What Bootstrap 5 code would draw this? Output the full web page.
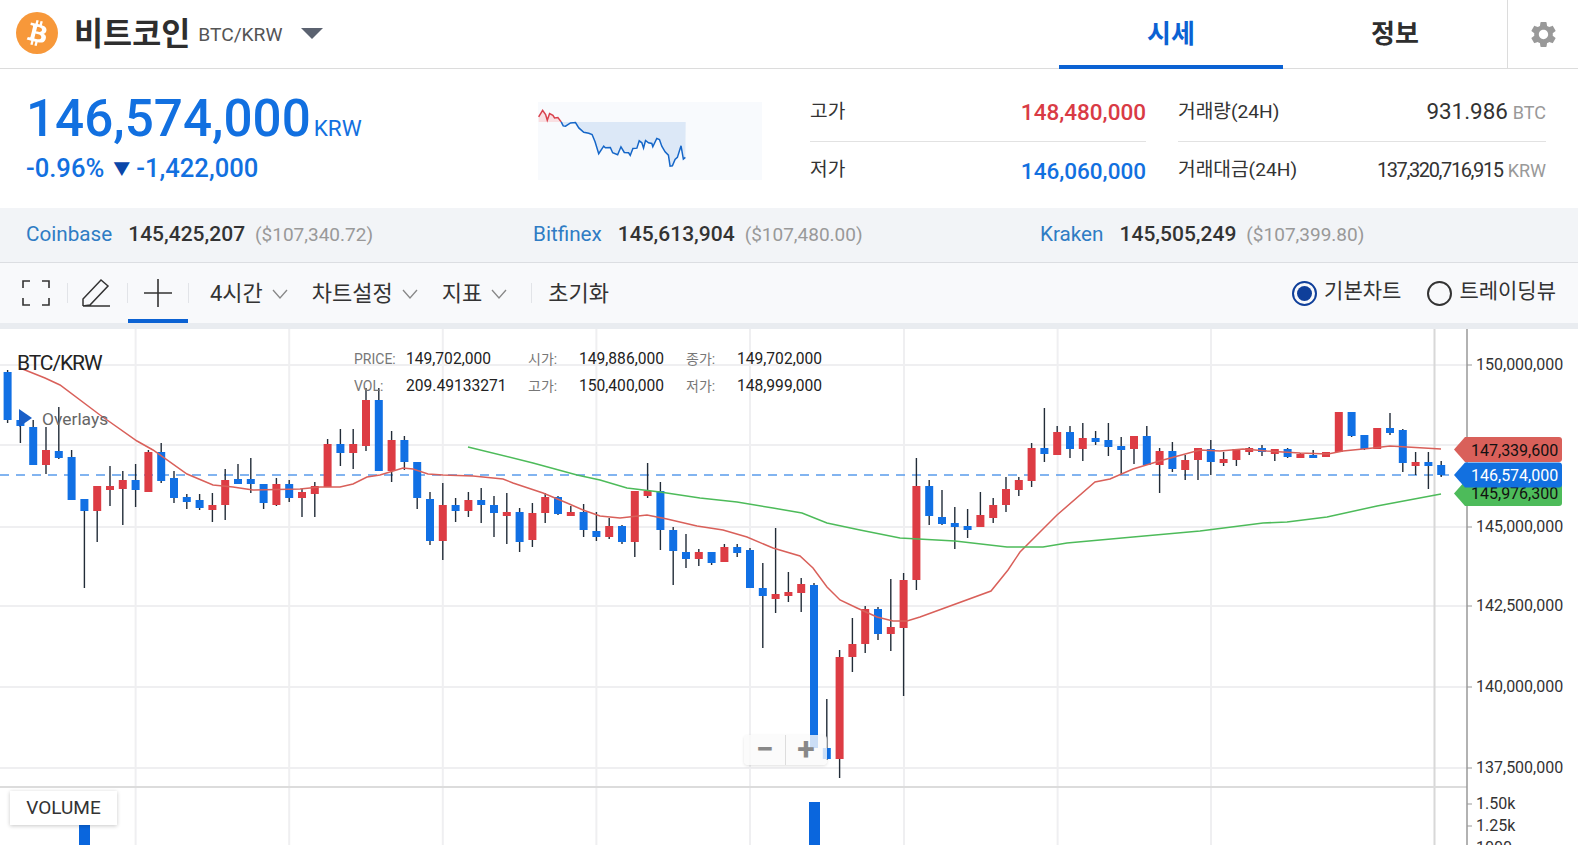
<!DOCTYPE html>
<html lang="ko">
<head>
    <meta charset="UTF-8">
    <meta name="viewport" content="width=device-width, initial-scale=1">
    <title>비트코인 BTC/KRW</title>
    <link href="https://cdn.jsdelivr.net/npm/bootstrap@5.3.0/dist/css/bootstrap.min.css" rel="stylesheet">
    <style>
        html, body { height: 845px; overflow: hidden; }
        body { font-family: Roboto, "Noto Sans CJK KR", sans-serif; color: #333; background: #fff; }
        .top-bar { height: 69px; border-bottom: 1px solid #dcdcdc; }
        .coin-logo { width: 42px; height: 42px; margin-left: 16px; margin-top: -2px; }
        .coin-name { font-size: 31.6px; font-weight: 700; margin-left: 16px; margin-top: 1px; color: #2e2e2e; }
        .coin-pair { font-size: 19.2px; color: #555; margin-left: 8px; margin-top: 2px; }
        .coin-caret { width: 0; height: 0; margin-left: 19px; margin-top: -1px; border-left: 11px solid transparent; border-right: 11px solid transparent; border-top: 11px solid #5b6270; }
        .tab-cell { width: 224px; height: 69px; font-size: 26px; font-weight: 700; color: #2e2e2e; margin-bottom: -1px; }
        .tab-cell.is-on { color: #0b62d3; border-bottom: 4px solid #0b62d3; padding-top: 4px; }
        .gear-cell { width: 71px; height: 68px; border-left: 1px solid #dcdcdc; }
        .price-row { height: 139px; }
        .price-main { width: 538px; padding-left: 26px; color: #1270e0; }
        .price-big { font-size: 51.2px; font-weight: 500; line-height: 60px; margin-top: 20px; }
        .price-unit { font-size: 22.5px; font-weight: 400; margin-left: 3px; }
        .price-sub { font-size: 25.6px; font-weight: 500; line-height: 32px; margin-top: -6px; }
        .down-arrow { color: #0a47a9; font-size: 17px; margin: 0 6px 0 9px; vertical-align: 2px; }
        .spark-box { width: 224px; height: 78px; margin-top: 33px; background: #f8fafd; }
        .stat-wrap { margin-left: 48px; margin-top: 14px; gap: 32px; }
        .stat-col { width: 336px; }
        .stat-col.wide { width: 368px; }
        .stat-line { height: 58px; font-size: 19.2px; }
        .stat-line + .stat-line { border-top: 1px solid #e2e2e2; }
        .stat-val { font-size: 22.5px; font-weight: 500; padding-top: 2px; }
        .stat-big { font-size: 22.4px; }
        .stat-long { font-size: 20px; letter-spacing: -1.4px; }
        .stat-unit { font-size: 18px; color: #999; margin-left: 5px; }
        .txt-up { color: #d93b45; }
        .txt-down { color: #1270e0; }
        .ex-strip { height: 54px; background: #f2f4f7; font-size: 20.7px; }
        .ex-item { width: 507px; padding-left: 26px; }
        .ex-name { color: #2f7cc4; margin-right: 16px; }
        .ex-val { font-size: 21px; font-weight: 500; margin-right: 10px; }
        .ex-usd { color: #999; font-size: 19px; }
        .tool-bar { height: 61px; background: #f8f9fb; border-top: 1px solid #dcdee2; font-size: 21px; color: #333; }
        .tool-ico { width: 59px; height: 60px; }
        .tool-ico.first { width: 63px; }
        .tool-ico.is-on { width: 60px; border-bottom: 4px solid #0b62d3; padding-top: 4px; }
        .tool-sep { width: 1px; height: 20px; background: #e2e4e8; }
        .tool-sep.wide-gap { margin-right: 21px; }
        .tool-text { font-size: 22px; padding-top: 1px; }
        .tool-drop { margin-right: 24px; }
        .tool-drop svg { margin-left: 9px; }
        .radio-dot { width: 25px; height: 25px; border-radius: 50%; border: 2px solid #333; margin-right: 7px; }
        .radio-dot.is-on { border-color: #0f3f9a; }
        .radio-dot.is-on::after { content: ""; width: 15px; height: 15px; border-radius: 50%; background: #0f3f9a; }
        .radio-dot.second { margin-left: 26px; }
        .radio-label { margin-top: -2px; }
        .radio-label.last { margin-right: 22px; }
        .under-strip { height: 6px; background: #e9ecf0; }
        .chart-zone { height: 516px; overflow: hidden; }
        .chart-zone svg { display: block; }
        .chart-title { left: 17px; top: 22px; font-size: 21px; letter-spacing: -1.1px; color: #222; line-height: 24px; }
        .chart-overlays { left: 42px; top: 80px; font-size: 17.4px; color: #666; line-height: 20px; }
        .chart-tri { left: 19px; top: 80px; width: 0; height: 0; border-top: 9px solid transparent; border-bottom: 9px solid transparent; border-left: 13px solid #1a5fc8; }
        .ohlc-box { left: 354px; top: 17px; font-size: 15.6px; line-height: 27px; color: #222; display: grid; grid-template-columns: 52px 122px 51px 107px 51px 90px; }
        .ohlc-key { color: #777; font-size: 14px; }
        .zoom-box { left: 744px; top: 406px; width: 83px; height: 30px; background: rgba(250,250,250,.8); border-radius: 4px; box-shadow: 0 1px 3px rgba(0,0,0,.12); }
        .zoom-half { width: 41px; font-size: 32px; line-height: 29px; font-weight: 700; color: #888; }
        .zoom-half + .zoom-half { border-left: 1px solid #ddd; }
        .volume-tag { left: 10px; top: 462px; width: 107px; height: 34px; line-height: 34px; background: #fff; font-size: 19px; color: #333; box-shadow: 0 1px 4px rgba(0,0,0,.22); }
    </style>
</head>
<body>
    <div class="top-bar d-flex align-items-center">
        <svg class="coin-logo flex-shrink-0" viewBox="0 0 32 32"><circle cx="16" cy="16" r="16" fill="#f7983a"/><path fill="#fff" d="M23.189 14.02c.314-2.096-1.283-3.223-3.465-3.975l.708-2.84-1.728-.43-.69 2.765c-.454-.114-.92-.22-1.385-.326l.695-2.783L15.596 6l-.708 2.839c-.376-.086-.746-.17-1.104-.26l.002-.009-2.384-.595-.46 1.846s1.283.294 1.256.312c.7.175.826.638.805 1.006l-.806 3.235c.048.012.11.03.18.057l-.183-.045-1.13 4.532c-.086.212-.303.531-.793.41.018.025-1.256-.313-1.256-.313l-.858 1.978 2.25.561c.418.105.828.215 1.231.318l-.715 2.872 1.727.43.708-2.84c.472.127.93.245 1.378.357l-.706 2.828 1.728.43.715-2.866c2.948.558 5.164.333 6.097-2.333.752-2.146-.037-3.385-1.588-4.192 1.13-.26 1.98-1.003 2.207-2.538zm-3.95 5.538c-.533 2.147-4.148.986-5.32.695l.95-3.805c1.172.293 4.929.872 4.37 3.11zm.535-5.569c-.487 1.953-3.495.96-4.47.717l.86-3.45c.975.243 4.118.696 3.61 2.733z"/></svg>
        <span class="coin-name">비트코인</span>
        <span class="coin-pair">BTC/KRW</span>
        <span class="coin-caret"></span>
        <div class="d-flex ms-auto">
            <div class="tab-cell is-on d-flex align-items-center justify-content-center">시세</div>
            <div class="tab-cell d-flex align-items-center justify-content-center">정보</div>
            <div class="gear-cell d-flex align-items-center justify-content-center">
                <svg width="31" height="31" viewBox="0 0 24 24" fill="#999"><path d="M19.14 12.94c.04-.3.06-.61.06-.94 0-.32-.02-.64-.07-.94l2.03-1.58c.18-.14.23-.41.12-.61l-1.92-3.32c-.12-.22-.37-.29-.59-.22l-2.39.96c-.5-.38-1.03-.7-1.62-.94l-.36-2.54c-.04-.24-.24-.41-.48-.41h-3.84c-.24 0-.43.17-.47.41l-.36 2.54c-.59.24-1.13.57-1.62.94l-2.39-.96c-.22-.08-.47 0-.59.22L2.74 8.87c-.12.21-.08.47.12.61l2.03 1.58c-.05.3-.09.63-.09.94s.02.64.07.94l-2.03 1.58c-.18.14-.23.41-.12.61l1.92 3.32c.12.22.37.29.59.22l2.39-.96c.5.38 1.03.7 1.62.94l.36 2.54c.05.24.24.41.48.41h3.84c.24 0 .44-.17.47-.41l.36-2.54c.59-.24 1.13-.56 1.62-.94l2.39.96c.22.08.47 0 .59-.22l1.92-3.32c.12-.22.07-.47-.12-.61l-2.01-1.58zM12 15.6c-1.98 0-3.6-1.62-3.6-3.6s1.62-3.6 3.6-3.6 3.6 1.62 3.6 3.6-1.62 3.6-3.6 3.6z"/></svg>
            </div>
        </div>
    </div>

    <div class="price-row d-flex">
        <div class="price-main">
            <div class="price-big">146,574,000<span class="price-unit">KRW</span></div>
            <div class="price-sub">-0.96%<span class="down-arrow">▼</span>-1,422,000</div>
        </div>
        <div class="spark-box">
            <svg width="224" height="78" viewBox="54 65 671 235">
                <path d="M54 125V110L66 90 75 103 80 120 87 100 97 105 102 113 112 112 122 125Z" fill="#f9dfe2"/>
                <path id="sparkFill" fill="#dce8f7"/>
                <path d="M54 110L66 90 75 103 80 120 87 100 97 105 102 113 112 112 122 125" fill="none" stroke="#d8404c" stroke-width="4.5"/>
                <path id="sparkLine" fill="none" stroke="#1566c8" stroke-width="4.5"/>
            </svg>
        </div>
        <div class="stat-wrap d-flex">
            <div class="stat-col">
                <div class="stat-line d-flex align-items-center justify-content-between"><span>고가</span><span class="stat-val txt-up">148,480,000</span></div>
                <div class="stat-line d-flex align-items-center justify-content-between"><span>저가</span><span class="stat-val txt-down">146,060,000</span></div>
            </div>
            <div class="stat-col wide">
                <div class="stat-line d-flex align-items-center justify-content-between"><span>거래량(24H)</span><span><span class="stat-big">931.986</span><span class="stat-unit">BTC</span></span></div>
                <div class="stat-line d-flex align-items-center justify-content-between"><span>거래대금(24H)</span><span><span class="stat-long">137,320,716,915</span><span class="stat-unit">KRW</span></span></div>
            </div>
        </div>
    </div>

    <div class="ex-strip d-flex align-items-center">
        <div class="ex-item"><span class="ex-name">Coinbase</span><span class="ex-val">145,425,207</span><span class="ex-usd">($107,340.72)</span></div>
        <div class="ex-item"><span class="ex-name">Bitfinex</span><span class="ex-val">145,613,904</span><span class="ex-usd">($107,480.00)</span></div>
        <div class="ex-item"><span class="ex-name">Kraken</span><span class="ex-val">145,505,249</span><span class="ex-usd">($107,399.80)</span></div>
    </div>

    <div class="tool-bar d-flex align-items-center">
        <div class="tool-ico first d-flex align-items-center justify-content-center ms-1">
            <svg width="28" height="26" viewBox="0 0 28 26" fill="none" stroke="#333" stroke-width="1.6"><path d="M1 8V1H8M20 1H27V8M27 18V25H20M8 25H1V18"/></svg>
        </div>
        <div class="tool-sep"></div>
        <div class="tool-ico d-flex align-items-center justify-content-center pe-1">
            <svg width="30" height="30" viewBox="0 0 30 30" fill="none" stroke="#333" stroke-width="1.5"><path d="M2 28V21L20 2 27 8 9 27 2 28H29"/></svg>
        </div>
        <div class="tool-sep"></div>
        <div class="tool-ico is-on d-flex align-items-center justify-content-center">
            <svg width="28" height="28" viewBox="0 0 28 28" stroke="#333" stroke-width="1.6"><path d="M14 0V28M0 14H28"/></svg>
        </div>
        <div class="tool-sep wide-gap"></div>
        <div class="tool-drop tool-text d-flex align-items-center">4시간<svg width="16" height="10" viewBox="0 0 16 10" fill="none" stroke="#888" stroke-width="1.3"><path d="M1 1L8 9 15 1"/></svg></div>
        <div class="tool-drop tool-text d-flex align-items-center">차트설정<svg width="16" height="10" viewBox="0 0 16 10" fill="none" stroke="#888" stroke-width="1.3"><path d="M1 1L8 9 15 1"/></svg></div>
        <div class="tool-drop tool-text d-flex align-items-center">지표<svg width="16" height="10" viewBox="0 0 16 10" fill="none" stroke="#888" stroke-width="1.3"><path d="M1 1L8 9 15 1"/></svg></div>
        <div class="tool-sep me-3"></div>
        <div class="tool-text">초기화</div>
        <div class="d-flex align-items-center ms-auto">
            <span class="radio-dot is-on d-flex align-items-center justify-content-center"></span><span class="radio-label">기본차트</span>
            <span class="radio-dot second d-flex"></span><span class="radio-label last">트레이딩뷰</span>
        </div>
    </div>
    <div class="under-strip"></div>

    <div class="chart-zone position-relative">
        <svg id="chart" width="1578" height="516" viewBox="0 329 1578 516"></svg>
        <div class="chart-title position-absolute">BTC/KRW</div>
        <div class="chart-tri position-absolute"></div>
        <div class="chart-overlays position-absolute">Overlays</div>
        <div class="ohlc-box position-absolute">
            <span class="ohlc-key">PRICE:</span><span>149,702,000</span><span class="ohlc-key">시가:</span><span>149,886,000</span><span class="ohlc-key">종가:</span><span>149,702,000</span>
            <span class="ohlc-key">VOL:</span><span>209.49133271</span><span class="ohlc-key">고가:</span><span>150,400,000</span><span class="ohlc-key">저가:</span><span>148,999,000</span>
        </div>
        <div class="zoom-box position-absolute d-flex text-center">
            <div class="zoom-half">−</div>
            <div class="zoom-half">+</div>
        </div>
        <div class="volume-tag position-absolute text-center">VOLUME</div>
    </div>

    <script src="https://cdn.jsdelivr.net/npm/bootstrap@5.3.0/dist/js/bootstrap.bundle.min.js"></script>
    <script>
        // sparkline, in px of the zoomed box
        const spark = "122 125,128 137,135 138,150 128,165 127,175 143,190 156,205 159,215 163,224 185,235 221,250 198,255 203,270 202,277 218,292 224,302 200,312 217,325 218,330 226,338 205,350 204,357 182,365 188,370 204,376 181,385 188,395 190,398 200,410 175,418 178,425 198,435 215,445 225,450 258,457 257,465 238,472 232,483 197,490 237,496 232";
        document.getElementById("sparkLine").setAttribute("d", "M" + spark);
        document.getElementById("sparkFill").setAttribute("d", "M" + spark + ",497 125Z");

        // bodyTop, bodyBottom, wickTop, wickBottom, colour
        const candles = [
            [372,420,370,423,"b"],[420,426,420,443,"b"],[427,465,420,465,"b"],[450,465,427,474,"r"],[451,458,407,459,"b"],
            [457,500,450,500,"b"],[499,511,499,588,"b"],[486,511,486,542,"r"],[486,490,466,506,"r"],[480,489,471,525,"r"],
            [480,490,464,507,"b"],[452,492,450,492,"r"],[452,481,443,483,"b"],[478,498,471,503,"b"],[497,502,494,509,"b"],
            [500,508,494,510,"b"],[505,510,493,522,"r"],[480,505,469,520,"r"],[479,484,464,484,"b"],[479,484,458,493,"b"],
            [484,503,484,509,"b"],[484,505,478,506,"r"],[484,498,480,502,"b"],[492,498,489,517,"r"],[486,494,482,517,"r"],
            [444,487,439,487,"r"],[444,453,429,466,"b"],[444,453,429,469,"r"],[400,446,388,451,"r"],[400,471,388,471,"b"],
            [440,471,431,482,"r"],[440,462,436,470,"b"],[462,498,462,509,"b"],[499,541,492,545,"b"],[505,541,483,560,"r"],
            [505,511,498,522,"b"],[500,511,492,517,"r"],[500,505,488,523,"b"],[505,513,496,537,"b"],[512,516,493,544,"r"],
            [512,542,508,552,"b"],[513,540,503,547,"r"],[497,513,493,523,"r"],[497,514,496,515,"b"],[512,516,506,516,"r"],
            [512,530,504,537,"b"],[531,537,512,541,"b"],[526,537,518,539,"r"],[526,542,525,544,"b"],[491,542,491,557,"r"],
            [491,496,463,498,"r"],[491,530,482,550,"b"],[530,551,527,585,"b"],[552,559,534,568,"b"],[552,559,549,566,"r"],
            [552,563,552,565,"b"],[547,562,544,562,"r"],[547,553,544,557,"b"],[550,588,548,588,"b"],[588,596,563,648,"b"],
            [594,599,528,613,"r"],[592,596,572,602,"r"],[584,593,578,612,"r"],[585,748,583,748,"b"],[748,759,699,760,"b"],
            [657,759,650,778,"r"],[644,657,618,672,"r"],[609,644,606,653,"r"],[609,634,607,640,"b"],[627,634,579,651,"r"],
            [580,628,573,696,"r"],[486,580,458,590,"r"],[486,516,480,525,"b"],[517,524,490,525,"b"],[523,527,507,549,"b"],
            [526,530,509,538,"b"],[515,527,492,527,"r"],[505,518,498,523,"r"],[489,505,477,512,"r"],[480,490,477,496,"r"],
            [448,481,443,487,"r"],[448,454,408,462,"b"],[432,455,426,455,"r"],[432,449,426,458,"b"],[438,449,423,461,"r"],
            [438,442,431,445,"b"],[440,447,423,456,"b"],[446,450,437,475,"b"],[436,449,436,464,"r"],[436,465,426,465,"b"],
            [451,465,448,493,"r"],[451,469,442,472,"b"],[460,470,455,480,"r"],[448,460,448,480,"r"],[449,462,440,475,"b"],
            [459,463,452,466,"r"],[449,460,449,466,"r"],[448,452,447,455,"r"],[448,452,445,456,"b"],[449,454,449,461,"r"],
            [449,457,448,458,"b"],[454,458,453,458,"r"],[455,458,450,458,"b"],[452,457,452,457,"r"],[412,452,412,452,"r"],
            [412,436,412,437,"b"],[435,449,435,450,"b"],[428,449,428,449,"r"],[428,433,413,435,"b"],[430,463,429,472,"b"],
            [462,466,452,475,"r"],[462,466,452,489,"b"],[465,475,461,477,"b"]
        ];
        const redAvg = "20 368,45 378,60 385,100 415,137 441,153 450,187 474,213 485,233 487,253 490,300 489,320 487,340 487,353 484,367 477,380 475,403 468,413 469,428 474,443 475,473 476,503 479,513 483,543 493,567 503,583 510,600 516,620 518,647 515,667 519,697 526,723 530,747 537,773 548,800 556,813 568,827 587,840 600,857 608,877 617,893 621,907 621,920 617,991 591,1008 570,1020 552,1057 515,1095 482,1110 479,1133 469,1163 460,1200 450,1220 451,1243 449,1267 451,1300 453,1328 454,1343 451,1373 448,1390 446,1407 447,1441 449";
        const greenAvg = "468 447,533 463,577 475,600 480,627 488,660 492,700 498,737 502,773 508,802 513,827 523,860 530,900 538,955 541,1007 547,1043 547,1067 543,1133 537,1200 531,1263 523,1287 522,1327 517,1377 506,1441 494";

        let g = "";
        // grid
        [365,445,527,606,687,768].forEach(y => g += `<path d="M0 ${y}H1467" stroke="#efeff1" stroke-width="2"/>`);
        [135.6,289.2,442.8,596.4,750,904,1057.6,1211].forEach(x => g += `<path d="M${x} 329V845" stroke="#efeff1" stroke-width="2"/>`);
        g += `<path d="M1434.5 329V845" stroke="#d8d8d8" stroke-width="2"/>`;
        g += `<path d="M0 787H1467" stroke="#dcdcdc" stroke-width="2"/>`;
        g += `<path d="M0 475H1454" stroke="#5a9cec" stroke-width="1.5" stroke-dasharray="9 7"/>`;
        // candles
        candles.forEach((c, i) => {
            const x = 7.6 + 12.8 * i;
            const col = c[4] == "r" ? "#dd3c44" : "#1170e4";
            g += `<path d="M${x} ${c[2]}V${c[3]}" stroke="#222c38" stroke-width="1.4"/>`;
            g += `<rect x="${x - 4}" y="${c[0]}" width="8" height="${c[1] - c[0]}" fill="${col}"/>`;
        });
        g += `<polyline points="${redAvg}" fill="none" stroke="#d9605a" stroke-width="1.5"/>`;
        g += `<polyline points="${greenAvg}" fill="none" stroke="#4dbb5a" stroke-width="1.5"/>`;
        // volume bars
        g += `<rect x="79" y="815" width="11" height="30" fill="#0a66dd"/>`;
        g += `<rect x="809" y="802" width="11" height="43" fill="#0a66dd"/>`;
        // axis
        g += `<path d="M1467 329V845" stroke="#999" stroke-width="1.5"/>`;
        const axisTxt = 'font-family="Roboto" font-size="16" fill="#333"';
        [[365,"150,000,000"],[527,"145,000,000"],[606,"142,500,000"],[687,"140,000,000"],[768,"137,500,000"],[804,"1.50k"],[826,"1.25k"],[848,"1000"]].forEach(a => {
            g += `<path d="M1467 ${a[0]}H1472" stroke="#999"/>`;
            g += `<text x="1476" y="${a[0] + 4.5}" ${axisTxt}>${a[1]}</text>`;
        });
        // price tags
        const tag = (y, fill, txt, col, dy) => {
            g += `<path d="M1454 ${y}L1465 ${y - 12.5}H1559Q1562 ${y - 12.5} 1562 ${y - 9.5}V${y + 9.5}Q1562 ${y + 12.5} 1559 ${y + 12.5}H1465Z" fill="${fill}"/>`;
            g += `<text x="1471" y="${y + dy}" ${axisTxt.replace('fill="#333"', 'fill="' + col + '"')}>${txt}</text>`;
        };
        tag(449.5, "#d9605a", "147,339,600", "#111", 6.5);
        tag(493.5, "#4dbb5a", "145,976,300", "#111", 5.5);
        tag(475, "#1270e0", "146,574,000", "#fff", 5.5);
        document.getElementById("chart").innerHTML = g;
    </script>
</body>
</html>
